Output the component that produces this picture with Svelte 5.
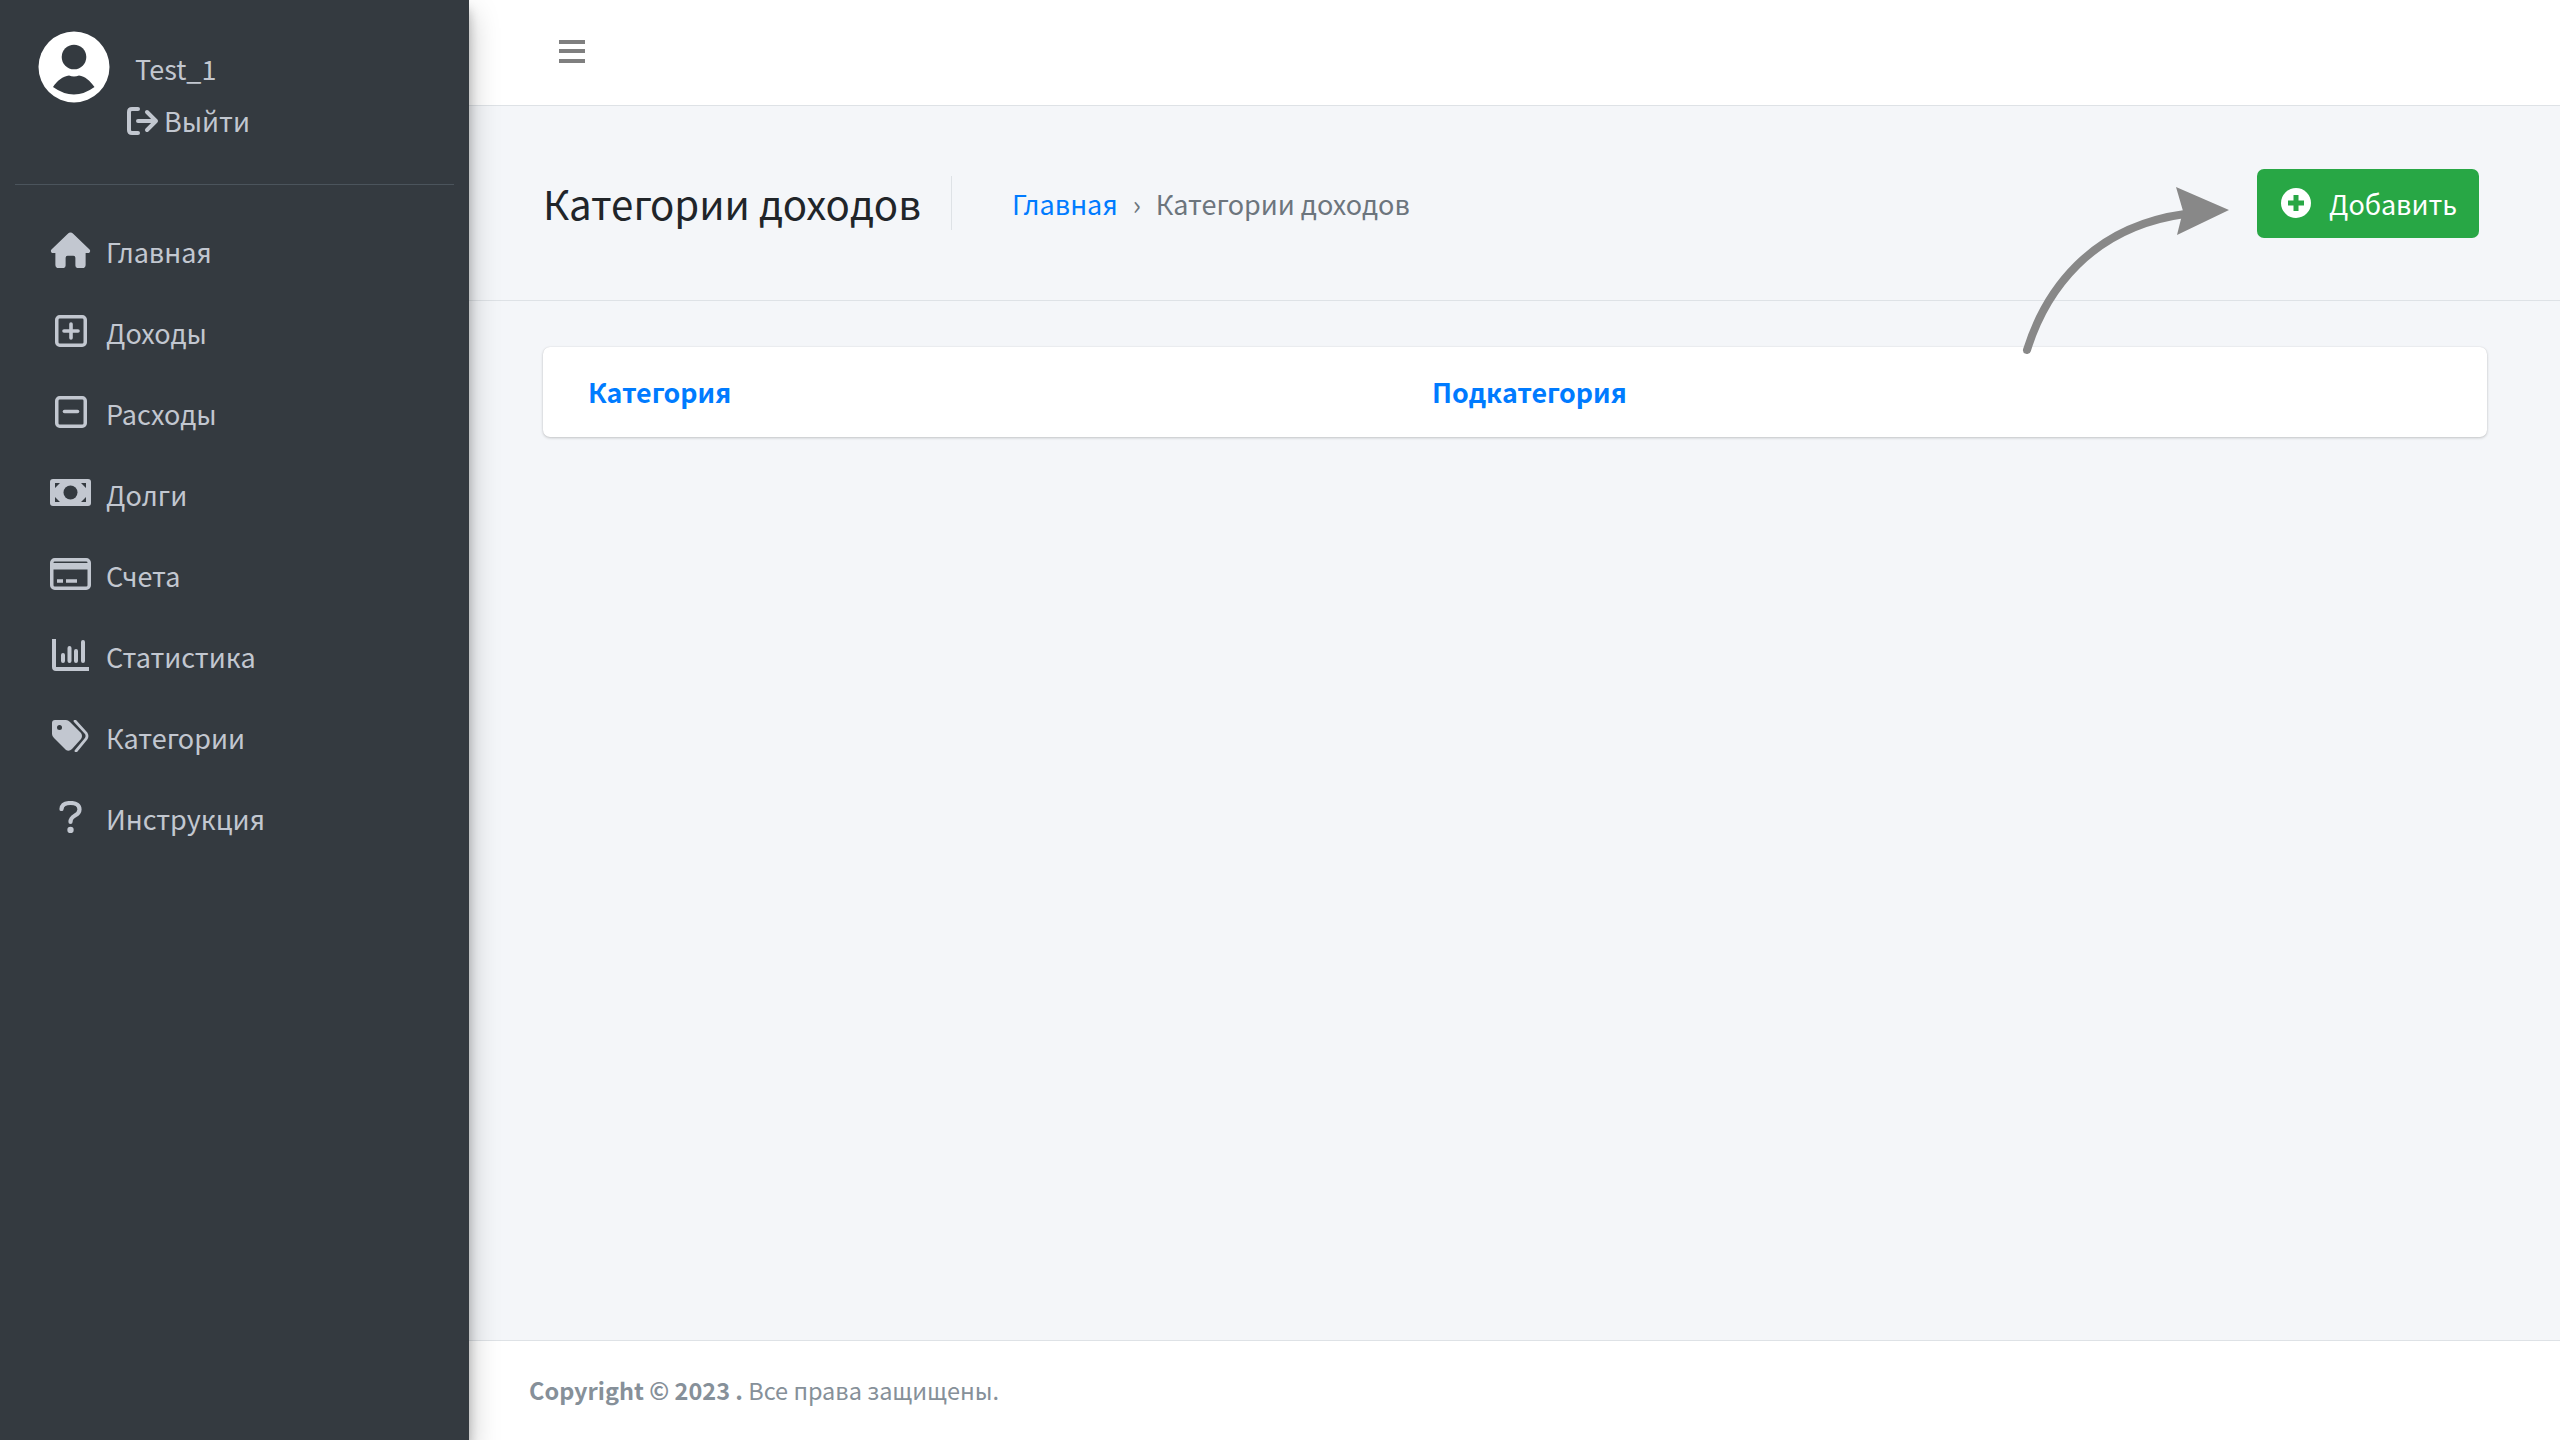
<script>
  const menu = ['Главная', 'Доходы', 'Расходы', 'Долги', 'Счета', 'Статистика', 'Категории', 'Инструкция'];
</script>

<div class="page">
  <aside class="sidebar">
    <div class="user">
      <svg class="avatar" viewBox="0 0 72 72">
        <circle cx="36" cy="36" r="35.5" fill="#fff" />
        <circle cx="36" cy="26" r="12.3" fill="#343a40" />
        <path d="M15 56 C19 50 25 45 31 44.500 Q36 46.500 41 44.500 C47 45 52 50 56.500 56 Q36 71 15 56Z" fill="#343a40" />
      </svg>
      <div class="user-text">
        <div class="name">Test_1</div>
        <a class="logout" href="#top">
          <svg class="logout-icon" viewBox="0 0 32 28">
            <path d="M11 2H5Q2 2 2 5V23Q2 26 5 26H11" fill="none" stroke="#c2c7d0" stroke-width="4" stroke-linecap="round" />
            <path d="M11 14H29M20 5L29 14L20 23" fill="none" stroke="#c2c7d0" stroke-width="4" stroke-linecap="round" stroke-linejoin="round" />
          </svg>
          Выйти
        </a>
      </div>
    </div>
    <nav class="menu">
      {#each menu as item, i}
        <a class="item" href="#top">
          <span class="icon">
            {#if i === 0}
              <svg width="42" height="38" viewBox="0 0 42 38">
                <path d="M21 1 Q22.500 1 24 2.500 L40.500 18.500 Q42 20.500 40 22 L36.500 22 V34 Q36.500 37.500 33 37.500 H28 Q26 37.500 26 35 V27 Q26 25 24 25 H18 Q16 25 16 27 V35 Q16 37.500 14 37.500 H9 Q5.500 37.500 5.500 34 V22 L2 22 Q0 20.500 1.500 18.500 L18 2.500 Q19.500 1 21 1Z" fill="#c2c7d0" />
              </svg>
            {:else if i === 1}
              <svg width="32" height="32" viewBox="0 0 32 32">
                <rect x="1.750" y="1.750" width="28.500" height="28.500" rx="3" fill="none" stroke="#c2c7d0" stroke-width="3.500" />
                <path d="M9 16H23M16 9V23" stroke="#c2c7d0" stroke-width="3.600" stroke-linecap="round" />
              </svg>
            {:else if i === 2}
              <svg width="32" height="32" viewBox="0 0 32 32">
                <rect x="1.750" y="1.750" width="28.500" height="28.500" rx="3" fill="none" stroke="#c2c7d0" stroke-width="3.500" />
                <path d="M9.500 15.500H22.500" stroke="#c2c7d0" stroke-width="3.600" stroke-linecap="round" />
              </svg>
            {:else if i === 3}
              <svg width="41" height="27" viewBox="0 0 41 27">
                <rect width="41" height="27" rx="3" fill="#c2c7d0" />
                <circle cx="20.500" cy="13.500" r="7" fill="#343a40" />
                <path d="M5 4H10L5 9ZM36 4H31L36 9ZM5 23H10L5 18ZM36 23H31L36 18Z" fill="#343a40" />
              </svg>
            {:else if i === 4}
              <svg width="41" height="32" viewBox="0 0 41 32">
                <rect x="1.750" y="1.750" width="37.500" height="28.500" rx="3" fill="none" stroke="#c2c7d0" stroke-width="3.500" />
                <rect x="2" y="5" width="37" height="6.500" fill="#c2c7d0" />
                <path d="M7 23H13M16 23H27" stroke="#c2c7d0" stroke-width="3.500" />
              </svg>
            {:else if i === 5}
              <svg width="37" height="32" viewBox="0 0 37 32">
                <path d="M2 0V28Q2 30 4 30H37" fill="none" stroke="#c2c7d0" stroke-width="4" />
                <path d="M11 16V22M17.500 9V22M24 12V22M31 3V22" stroke="#c2c7d0" stroke-width="4" stroke-linecap="round" />
              </svg>
            {:else if i === 6}
              <svg width="37" height="32" viewBox="0 0 37 32">
                <path d="M0 3Q0 0 3 0H14Q16 0 18 2L29 13Q31 16 29 19L20 29Q17 32 14 30L2 18Q0 16 0 14Z" fill="#c2c7d0" />
                <circle cx="7.500" cy="7.500" r="2.500" fill="#343a40" />
                <path d="M23 1L34 13Q36 16 34 19L24 31" fill="none" stroke="#c2c7d0" stroke-width="2.800" stroke-linecap="round" />
              </svg>
            {:else}
              <svg width="23" height="32" viewBox="0 0 23 32">
                <path d="M2.500 8Q3 2 11.500 2Q20.500 2 20.500 8.500Q20.500 12 16 14.500Q11.500 17 11.500 21" fill="none" stroke="#c2c7d0" stroke-width="4.200" stroke-linecap="round" />
                <circle cx="11.500" cy="29" r="3.200" fill="#c2c7d0" />
              </svg>
            {/if}
          </span>
          <span class="label">{item}</span>
        </a>
      {/each}
    </nav>
  </aside>

  <div class="main">
    <header class="topbar">
      <div class="burger"><span></span><span></span><span></span></div>
    </header>

    <section class="content-header">
      <h1>Категории доходов</h1>
      <div class="crumbs">
        <a href="#top">Главная</a>
        <span class="sep">›</span>
        <span>Категории доходов</span>
      </div>
      <button class="add">
        <svg width="30" height="30" viewBox="0 0 30 30">
          <circle cx="15" cy="15" r="15" fill="#fff" />
          <path d="M15 7V23M7 15H23" stroke="#28a745" stroke-width="5" />
        </svg>
        Добавить
      </button>
      <svg class="arrow" width="210" height="170" viewBox="0 0 210 170">
        <path d="M7 163 C25 105 70 40 165 27" fill="none" stroke="#888" stroke-width="8" stroke-linecap="round" />
        <path d="M156 0 L209 23 L157 48 L163 24Z" fill="#888" />
      </svg>
    </section>

    <div class="content">
      <div class="card">
        <a class="col" href="#top">Категория</a>
        <a class="col" href="#top">Подкатегория</a>
      </div>
    </div>

    <footer class="footer">
      <b>Copyright © 2023 .</b> Все права защищены.
    </footer>
  </div>
</div>

<style>
  :global(body) {
    margin: 0;
    background: #f4f6f9;
    font-family: "Noto Sans CJK SC", "Noto Sans", sans-serif;
  }

  a {
    text-decoration: none;
  }

  .page {
    display: flex;
    height: 1440px;
    overflow: hidden;
  }

  .sidebar {
    width: 469px;
    flex: none;
    background: #343a40;
    box-shadow: 0 14px 28px rgba(0, 0, 0, 0.25), 0 10px 10px rgba(0, 0, 0, 0.22);
    z-index: 2;
    color: #c2c7d0;
  }

  .user {
    display: flex;
    align-items: flex-start;
    margin: 0 15px;
    padding: 31px 0 0 23px;
    height: 153px;
    border-bottom: 1px solid #4b545c;
  }

  .avatar {
    width: 72px;
    height: 72px;
  }

  .user-text {
    margin-left: 17px;
  }

  .name {
    padding: 18px 0 0 8px;
    font-size: 27px;
    line-height: 40px;
  }

  .logout {
    display: flex;
    align-items: center;
    gap: 5px;
    margin-top: 12px;
    color: #c2c7d0;
    font-size: 27px;
    line-height: 40px;
  }

  .logout-icon {
    width: 32px;
    height: 28px;
  }

  .menu {
    padding-top: 26px;
  }

  .item {
    display: flex;
    height: 81px;
    align-items: center;
    color: #c2c7d0;
    font-size: 27px;
  }

  .icon {
    width: 106px;
    padding-left: 50px;
    padding-right: 15px;
    box-sizing: border-box;
    display: flex;
    justify-content: center;
    margin-top: -4px;
  }

  .label {
    line-height: 40px;
  }

  .main {
    flex: 1;
    display: flex;
    flex-direction: column;
    min-width: 0;
  }

  .topbar {
    height: 105px;
    flex: none;
    background: #fff;
    border-bottom: 1px solid #dee2e6;
    display: flex;
    align-items: center;
    padding-left: 90px;
  }

  .burger {
    display: flex;
    flex-direction: column;
    gap: 5.500px;
    width: 26px;
    margin-bottom: 3px;
  }

  .burger span {
    height: 4px;
    background: #7f7f7f;
  }

  .content-header {
    position: relative;
    height: 195px;
    flex: none;
    box-sizing: border-box;
    border-bottom: 1px solid #dee2e6;
    display: flex;
    align-items: center;
    padding: 0 81px 0 74px;
  }

  h1 {
    margin: 0;
    padding-right: 30px;
    border-right: 1px solid #dee2e6;
    font-size: 40.200px;
    font-weight: 400;
    line-height: 54px;
    color: #212529;
  }

  .crumbs {
    display: flex;
    align-items: center;
    margin-left: 60px;
    margin-top: 1px;
    font-size: 27px;
    line-height: 40px;
    color: #6c757d;
  }

  .crumbs a {
    color: #007bff;
  }

  .sep {
    width: 38px;
    text-align: center;
  }

  .add {
    margin-left: auto;
    height: 69px;
    width: 222px;
    border: 0;
    border-radius: 7px;
    background: #28a745;
    color: #fff;
    font: inherit;
    font-size: 27px;
    display: flex;
    align-items: center;
    gap: 18px;
    padding: 0 0 0 24px;
  }

  .add svg {
    flex: none;
  }

  /* arrow pointing at the button, sits over the header */
  .arrow {
    position: absolute;
    left: 1551px;
    top: 81px;
    z-index: 1;
    overflow: visible;
  }

  .content {
    flex: 1;
    padding: 46px 73px 0 74px;
  }

  .card {
    display: grid;
    grid-template-columns: 844px 1fr;
    align-items: center;
    height: 90px;
    padding-left: 45px;
    background: #fff;
    border-radius: 7px;
    box-shadow: 0 0 1px rgba(0, 0, 0, 0.125), 0 1px 3px rgba(0, 0, 0, 0.2);
  }

  .col {
    color: #007bff;
    font-size: 26.800px;
    font-weight: 700;
    line-height: 40px;
  }

  .footer {
    height: 100px;
    flex: none;
    box-sizing: border-box;
    background: #fff;
    border-top: 1px solid #dee2e6;
    padding: 29px 0 0 60px;
    color: #869099;
    font-size: 23.500px;
    line-height: 40px;
  }
</style>
